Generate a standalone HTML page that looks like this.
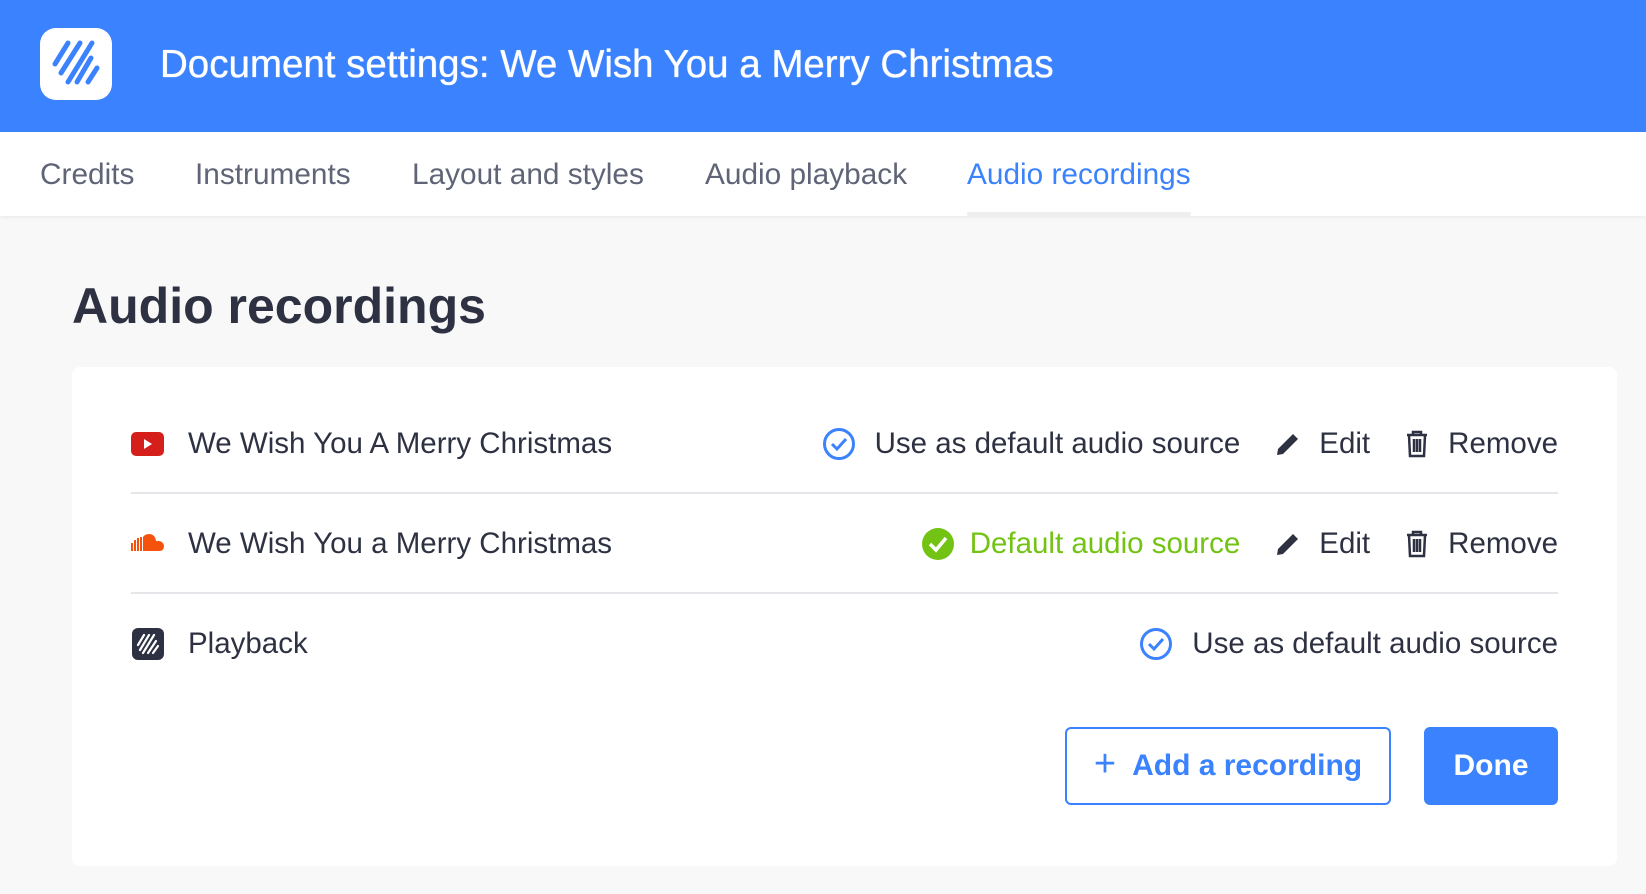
<!DOCTYPE html>
<html><head><meta charset="utf-8"><style>
*{margin:0;padding:0;box-sizing:border-box}
body{width:1646px;height:894px;background:#f8f8f8;font-family:"Liberation Sans",sans-serif;color:#2d3142;overflow:hidden;position:relative}
.hdr{position:absolute;left:0;top:0;width:1646px;height:132px;background:#3b82fe}
.logo{position:absolute;left:40px;top:28px;width:72px;height:72px;background:#fff;border-radius:16px}
.ttl{position:absolute;left:160px;top:43px;font-size:38.5px;color:#fff;white-space:nowrap;text-shadow:0 0 0.6px #fff,0 0 0.6px #fff}
.tabs{position:absolute;left:0;top:132px;width:1646px;height:84px;background:#fff;box-shadow:0 2px 4px rgba(0,0,0,.05)}
.tab{position:absolute;top:26px;font-size:29.8px;color:#5f6477;white-space:nowrap}
.tab.a{color:#3b82fe}
.ul{position:absolute;left:967px;top:80px;width:224px;height:4px;background:#eee;border-radius:2px}
h1{position:absolute;left:72px;top:277px;font-size:50px;font-weight:bold;white-space:nowrap}
.card{position:absolute;left:72px;top:367px;width:1545px;height:499px;background:#fff;border-radius:8px}
.row{position:absolute;left:131px;width:1427px;height:40px;display:flex;align-items:center;font-size:29.5px;white-space:nowrap}
.row .ic{width:34px;height:28px;margin-right:23px;display:flex;align-items:center}
.row .sp{flex:1}
.row .it{display:flex;align-items:center}
.div{position:absolute;left:131px;width:1427px;height:2px;background:#e6e6ea}
.btn{position:absolute;top:727px;height:78px;border-radius:6px;font-size:30px;font-weight:bold;display:flex;align-items:center;justify-content:center}
</style></head><body>
<div class="hdr">
 <div class="logo"><svg width="72" height="72" viewBox="0 0 72 72"><g stroke="#3b82fe" stroke-width="5" stroke-linecap="round"><line x1="28" y1="15" x2="15" y2="36"/><line x1="40" y1="15" x2="21" y2="45"/><line x1="52" y1="15" x2="28" y2="54"/><line x1="51" y1="30" x2="37" y2="54"/><line x1="57" y1="40" x2="48" y2="54"/></g></svg></div>
 <div class="ttl">Document settings: We Wish You a Merry Christmas</div>
</div>
<div class="tabs">
 <div class="tab" style="left:40px">Credits</div>
 <div class="tab" style="left:195px">Instruments</div>
 <div class="tab" style="left:412px">Layout and styles</div>
 <div class="tab" style="left:705px">Audio playback</div>
 <div class="tab a" style="left:967px">Audio recordings</div>
 <div class="ul"></div>
</div>
<h1>Audio recordings</h1>
<div class="card"></div>
<div class="row" style="top:424px">
 <div class="ic"><svg width="34" height="26"><rect x="0" y="1" width="33" height="24" rx="5" fill="#d41f1b"/><path d="M13 8 L21 13 L13 18Z" fill="#fff"/></svg></div>
 <span>We Wish You A Merry Christmas</span><span class="sp"></span>
 <span class="it" style="margin-right:34px"><svg width="34" height="34" style="margin-right:19px"><circle cx="17" cy="17" r="14.5" fill="none" stroke="#3b82fe" stroke-width="3"/><path d="M10 17 L15 22 L24 12" fill="none" stroke="#3b82fe" stroke-width="3"/></svg>Use as default audio source</span>
 <span class="it" style="margin-right:34px"><svg width="28" height="28" style="margin-right:17px"><path d="M3 25 L4 19 L19 4 L24 9 L9 24Z" fill="#2d3142"/></svg>Edit</span>
 <span class="it"><svg width="26" height="28" style="margin-right:18px"><path d="M3 5H23M9 5V2H17V5M5 5L6 26H20L21 5M10 9V22M13 9V22M16 9V22" fill="none" stroke="#2d3142" stroke-width="2.5"/></svg>Remove</span>
</div>
<div class="div" style="top:492px"></div>
<div class="row" style="top:524px">
 <div class="ic"><svg width="34" height="20"><g fill="#f5520e"><rect x="0" y="9" width="2" height="8"/><rect x="3" y="6" width="2" height="11"/><rect x="6" y="4" width="2" height="13"/><rect x="9" y="3" width="2" height="14"/><path d="M12 17V3Q14 0 18 0Q24 0 25 7Q32 6 33 12Q33 17 28 17Z"/></g></svg></div>
 <span>We Wish You a Merry Christmas</span><span class="sp"></span>
 <span class="it" style="margin-right:34px;color:#73c314"><svg width="34" height="34" style="margin-right:15px"><circle cx="17" cy="17" r="16" fill="#73c314"/><path d="M9 17 L15 23 L25 11" fill="none" stroke="#fff" stroke-width="3.5"/></svg>Default audio source</span>
 <span class="it" style="margin-right:34px"><svg width="28" height="28" style="margin-right:17px"><path d="M3 25 L4 19 L19 4 L24 9 L9 24Z" fill="#2d3142"/></svg>Edit</span>
 <span class="it"><svg width="26" height="28" style="margin-right:18px"><path d="M3 5H23M9 5V2H17V5M5 5L6 26H20L21 5M10 9V22M13 9V22M16 9V22" fill="none" stroke="#2d3142" stroke-width="2.5"/></svg>Remove</span>
</div>
<div class="div" style="top:592px"></div>
<div class="row" style="top:624px">
 <div class="ic"><svg width="34" height="34"><rect x="1" y="1" width="32" height="32" rx="6" fill="#2d3142"/><g stroke="#fff" stroke-width="2.2" stroke-linecap="round"><line x1="13" y1="8" x2="7" y2="18"/><line x1="18" y1="8" x2="9" y2="23"/><line x1="23" y1="8" x2="12" y2="26"/><line x1="25" y1="14" x2="17" y2="26"/><line x1="27" y1="19" x2="22" y2="26"/></g></svg></div>
 <span>Playback</span><span class="sp"></span>
 <span class="it"><svg width="34" height="34" style="margin-right:19px"><circle cx="17" cy="17" r="14.5" fill="none" stroke="#3b82fe" stroke-width="3"/><path d="M10 17 L15 22 L24 12" fill="none" stroke="#3b82fe" stroke-width="3"/></svg>Use as default audio source</span>
</div>
<div class="btn" style="left:1065px;width:326px;border:2px solid #3b82fe;color:#3b82fe;background:#fff"><span style="font-weight:normal;font-size:38px;margin-right:16px;margin-top:-4px">+</span>Add a recording</div>
<div class="btn" style="left:1424px;width:134px;background:#3b82fe;color:#fff">Done</div>
</body></html>
